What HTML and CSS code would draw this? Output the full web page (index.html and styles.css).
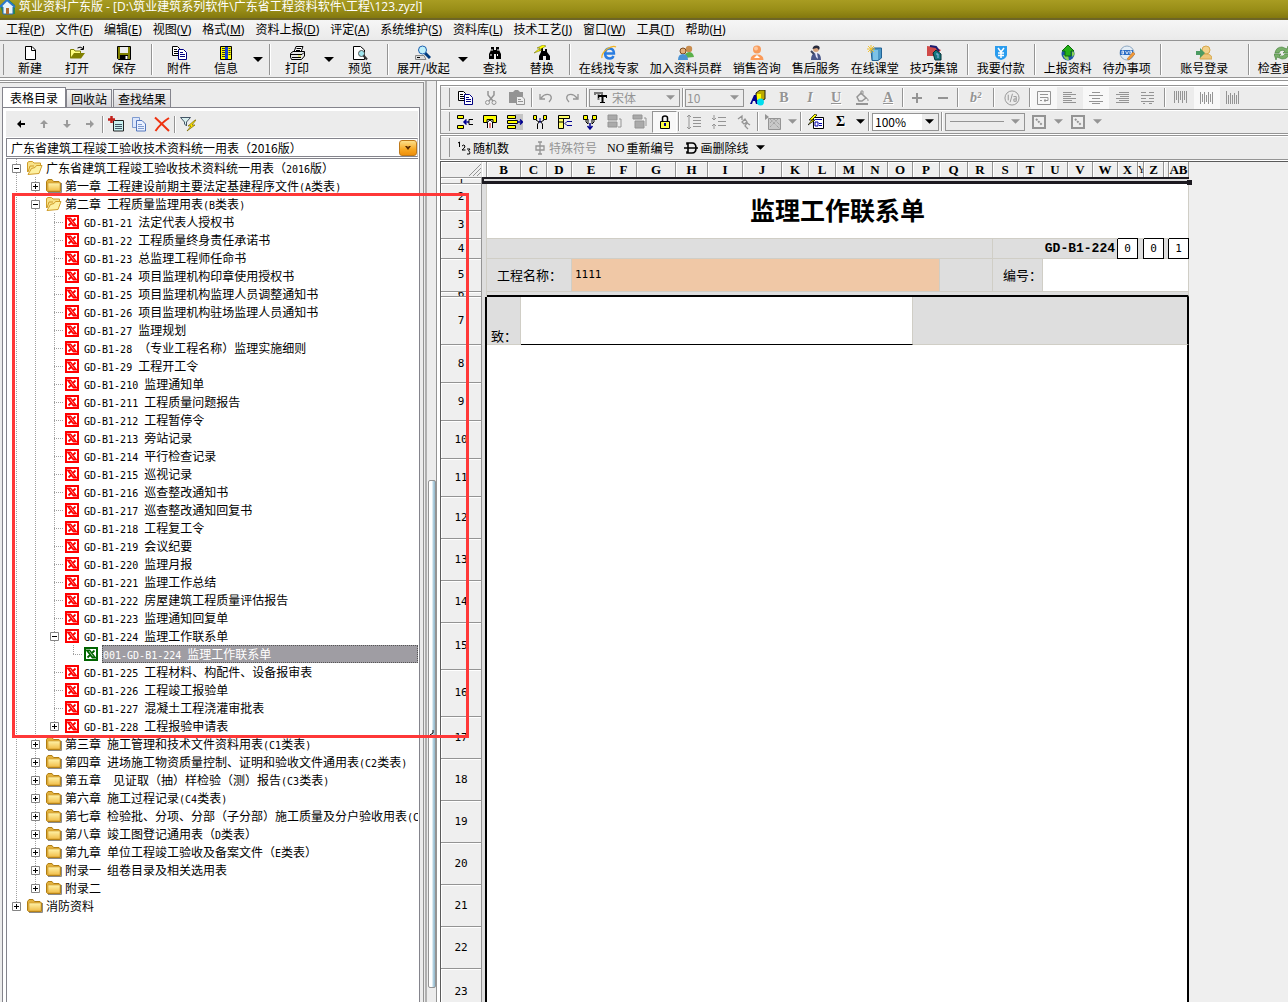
FILE: index.html
```html
<!DOCTYPE html>
<html lang="zh-CN">
<head>
<meta charset="utf-8">
<title>筑业资料广东版</title>
<link rel="stylesheet" href="styles.css">
</head>
<body>
<svg class="defs" width="0" height="0" aria-hidden="true">
  <defs>
    <linearGradient id="gold" x1="0" y1="0" x2="0" y2="1"><stop offset="0" stop-color="#fff3a8"/><stop offset="1" stop-color="#f0bd48"/></linearGradient>
  </defs>
  <symbol id="closed" viewBox="0 0 17 16"><path d="M3 14.500H16.500V5" fill="none" stroke="#8a8a8a"/><path d="M1.500 12.500V3.500L3 1.500H7L8.500 3.500H14L15.500 5V13.500H2.500Z" fill="#e2b13c" stroke="#b07d12"/><path d="M3 5H15V13H3Z" fill="url(#gold)" stroke="#c9962a" stroke-width=".6"/></symbol>
  <symbol id="open" viewBox="0 0 17 16"><path d="M1.500 12V2.500L3 1.500H6.500L8 3H14.500V7" fill="#f8e287" stroke="#cf9d2a"/><path d="M2 14.500L5.500 8.500L9 7.500L10.500 5.500H16L13 13.500Z" fill="#fdf0a0" stroke="#cf9d2a"/><path d="M2 12L4 6H8" fill="none" stroke="#cf9d2a"/></symbol>
  <symbol id="sheet" viewBox="0 0 14 14"><path d="M0 0H14V14H0Z" fill="currentColor"/><path d="M2 2H12V12H2Z" fill="#fff"/><path d="M3 3.500H5.500L11 10.500H8.500ZM10.500 3.500L3.500 10.500" fill="currentColor" stroke="currentColor" stroke-width="1.800"/><path d="M5 4L9 9.500" stroke="#fff" stroke-width=".6"/></symbol>
  <symbol id="plus" viewBox="0 0 9 9"><path d="M.5.5H8.500V8.500H.5Z" fill="#fff" stroke="#848484"/><path d="M2 4.500H7M4.500 2V7" stroke="#000"/></symbol>
  <symbol id="minus" viewBox="0 0 9 9"><path d="M.5.5H8.500V8.500H.5Z" fill="#fff" stroke="#848484"/><path d="M2 4.500H7" stroke="#000"/></symbol>
  <symbol id="down" viewBox="0 0 10 5"><path d="M0 0H10L5 5Z" fill="currentColor"/></symbol>
  <symbol id="copy" viewBox="0 0 16 16"><path d="M1.500 1.500H6.500L8.500 3.500V10.500H1.500Z" fill="#fff" stroke="#000"/><path d="M3 4.500H6M3 6.500H7M3 8.500H7" stroke="#000"/><path d="M7.500 4.500H12.500L15.500 7.500V14.500H7.500Z" fill="#fff" stroke="#000080"/><path d="M9 7.500H12M9 9.500H14M9 11.500H14" stroke="#000080"/></symbol>
  <symbol id="binoc" viewBox="0 0 16 16"><path d="M4 2H7V5H9V2H12V5L14 9V14H9V9H7V14H2V9L4 5Z" fill="#000"/><path d="M5 4V6M11 4V6M4 9V11M10.500 9V11" stroke="#fff"/></symbol>
  <symbol id="box" viewBox="0 0 14 14"><path d="M1 1H13V13H1Z" fill="#eee" stroke="#949494" stroke-width="2"/><path d="M4 4L10 10" stroke="#949494" stroke-width="2" stroke-dasharray="2 1"/></symbol>
</svg>

<header class="titlebar">
  <svg width="16" height="16" viewBox="0 0 16 16"><path d="M0 7L8 0L15 6V15H3Z" fill="#2d8a3d"/><path d="M0 7L7 1L15 8H13V15H3V8Z" fill="#e8f3fa" stroke="#286cb8"/><path d="M0 8L7 1L15 8" fill="none" stroke="#2d79c9" stroke-width="2"/><path d="M6 9H9V15H6Z" fill="#b06a30"/></svg>
  <h1>筑业资料广东版 - [D:\筑业建筑系列软件\广东省工程资料软件\工程\123.zyzl]</h1>
</header>

<nav class="menubar">
  <a href="#">工程(<u>P</u>)</a><a href="#">文件(<u>F</u>)</a><a href="#">编辑(<u>E</u>)</a><a href="#">视图(<u>V</u>)</a><a href="#">格式(<u>M</u>)</a><a href="#">资料上报(<u>D</u>)</a><a href="#">评定(<u>A</u>)</a><a href="#">系统维护(<u>S</u>)</a><a href="#">资料库(<u>L</u>)</a><a href="#">技术工艺(<u>J</u>)</a><a href="#">窗口(<u>W</u>)</a><a href="#">工具(<u>T</u>)</a><a href="#">帮助(<u>H</u>)</a>
</nav>

<div class="toolbar" role="toolbar" aria-label="常用">
  <button><svg class="ic" viewBox="0 0 16 16"><path d="M3.500 1.500H10L13.500 5V14.500H3.500Z" fill="#fff" stroke="#000"/><path d="M9.500 1.500V5.500H13.500" fill="none" stroke="#000"/></svg>新建</button>
  <button><svg class="ic" viewBox="0 0 16 16"><path d="M1.500 13V4.500H5L6 6H11.500V8" fill="#ffff80" stroke="#808000"/><path d="M1 13.500L5 8H16L12 13.500Z" fill="#808000"/><path d="M8.500 3Q11 1 14 3.500M14.500 1V4.500H11.500" fill="none" stroke="#000"/></svg>打开</button>
  <button><svg class="ic" viewBox="0 0 16 16"><path d="M1.500 1.500H14.500V14.500H2.500L1.500 13.500Z" fill="#808000" stroke="#000"/><path d="M4 2H12V8H4Z" fill="#ececec"/><path d="M4 10H12V14H4Z" fill="#000"/><path d="M9.500 11H11.500V14H9.500Z" fill="#fff"/></svg>保存</button>
  <span class="sep"></span>
  <button><svg class="ic"><use href="#copy"/></svg>附件</button>
  <button><svg class="ic" viewBox="0 0 16 16"><path d="M2.500 1.500H13.500V14.500H2.500Z" fill="#ff0" stroke="#000"/><path d="M7 2H10V14H7Z" fill="#1540d8"/><path d="M4 3.500H7M4 5.500H7M4 7.500H7M4 9.500H7M4 11.500H7M10.500 3.500H12.500M10.500 5.500H12.500M10.500 7.500H12.500M10.500 9.500H12.500" stroke="#333"/></svg>信息</button>
  <button class="drop" aria-label="信息选项"><svg><use href="#down"/></svg></button>
  <span class="sep"></span>
  <button><svg class="ic" viewBox="0 0 16 16"><path d="M5 7L7 1.500H14L12 7" fill="#fff" stroke="#000"/><path d="M7.500 3.500H12M7 5.500H11" stroke="#000"/><path d="M1.500 8.500L4 6.500H15.500V11L12.500 14.500H2.500L1.500 12Z" fill="#e8e8e8" stroke="#000"/><path d="M2 9.500H13L15 7.500M3 12.500H12" fill="none" stroke="#000"/><path d="M9 11H12" stroke="#dd0"/></svg>打印</button>
  <button class="drop" aria-label="打印选项"><svg><use href="#down"/></svg></button>
  <button><svg class="ic" viewBox="0 0 16 16"><path d="M1.500 1.500H8.500L12.500 5V14.500H1.500Z" fill="#fff" stroke="#000"/><circle cx="9.500" cy="8.500" r="3" fill="#9fe6ee" stroke="#555"/><path d="M11.500 10.500L15 14.500" stroke="#333" stroke-width="2"/></svg>预览</button>
  <span class="sep"></span>
  <button><svg class="ic" viewBox="0 0 16 16"><path d="M.5 10.500H9L11 14.500H.5Z" fill="#ddd" stroke="#888"/><path d="M2 12.500H5" stroke="#000"/><path d="M10 8L15 13" stroke="#003a7c" stroke-width="3"/><circle cx="7.500" cy="5" r="4" fill="#bff0fb" stroke="#1e60b0"/></svg>展开/收起</button>
  <button class="drop" aria-label="展开选项"><svg><use href="#down"/></svg></button>
  <button><svg class="ic"><use href="#binoc"/></svg>查找</button>
  <button><svg class="ic" viewBox="0 0 16 16"><path d="M7 3H9V6H11V4H13V7L16 11V15H12V11H9V15H5V11L7 7Z" fill="#000"/><path d="M9 0L3 3H6L0 8L8 5H5L12 1Z" fill="#ff0" stroke="#660" stroke-width=".5"/></svg>替换</button>
  <span class="sep"></span>
  <button><svg class="ic" viewBox="0 0 16 16"><path d="M3.500 8.500H13Q13 3.500 8.500 3.500T4 9Q4.500 13.500 9 13.500Q11.500 13.500 12.500 11" fill="none" stroke="#2a7de1" stroke-width="2.400"/><path d="M1 13Q0 9 6 4Q12 0 15 2" fill="none" stroke="#f0b323" stroke-width="1.200"/></svg>在线找专家</button>
  <button><svg class="ic" viewBox="0 0 16 16"><circle cx="11" cy="4" r="3.200" fill="#c98d4e"/><path d="M6 13Q7 7 11 7T16 12Z" fill="#5bb04a"/><circle cx="5" cy="6" r="3" fill="#e3b07c" stroke="#7a4b20"/><path d="M0 15Q0 9 5 9T10 15Z" fill="#4a93d4"/></svg>加入资料员群</button>
  <button><svg class="ic" viewBox="0 0 16 16"><circle cx="8" cy="4.500" r="4" fill="#f79a5a"/><circle cx="7" cy="3.500" r="2" fill="#fdc79e"/><path d="M1.500 15Q1.500 9.500 8 9.500T14.500 15Z" fill="#fb9a58"/><path d="M5 13L8 10L11 13Z" fill="#fff"/></svg>销售咨询</button>
  <button><svg class="ic" viewBox="0 0 16 16"><circle cx="8" cy="4" r="3" fill="#d6a27c"/><path d="M4.500 4Q5 0 9 .5T11 5L9 3Z" fill="#272a3c"/><path d="M3 15Q3 8 8 8T13 15Z" fill="#48568a"/><path d="M7 8L9 8L10 14L8 12Z" fill="#e8e8ff"/><path d="M3 6L6 9" stroke="#39435f" stroke-width="2"/></svg>售后服务</button>
  <button><svg class="ic" viewBox="0 0 16 16"><path d="M4 5L7 3H14.500V13L11 15.500H5Z" fill="#4a98c8" stroke="#236394"/><path d="M6 5H11V15H6Z" fill="#7cc2e6"/><path d="M4 0V8M0 4H8M1 1L7 7M7 1L1 7" stroke="#f2c230"/></svg>在线课堂</button>
  <button><svg class="ic" viewBox="0 0 16 16"><path d="M1 1L9 2L15 5L10 11H1Z" fill="#d04a48"/><path d="M4 1L10 2L13 6" fill="none" stroke="#1b1c70" stroke-width="2"/><path d="M7 8L10 5L15 9V15H9Z" fill="#157a80" stroke="#052e35"/><path d="M10 9H12V13" stroke="#9be" fill="none"/></svg>技巧集锦</button>
  <span class="sep"></span>
  <button><svg class="ic" viewBox="0 0 16 16"><path d="M2 1H14V10Q13 14 8 15Q3 14 2 10Z" fill="#2a9cee"/><path d="M5 3L8 7L11 3M8 7V13M5 8H11M5 10.500H11" fill="none" stroke="#fff" stroke-width="1.500"/></svg>我要付款</button>
  <span class="sep"></span>
  <button><svg class="ic" viewBox="0 0 16 16"><circle cx="8" cy="9" r="6.500" fill="#1d55a8"/><path d="M3 10Q5 16 9 15L8 10ZM12 5L15 9L12 12Z" fill="#8ad05a"/><path d="M8 0L14 6H11V11H5V6H2Z" fill="#24b018" stroke="#0a6b0a"/></svg>上报资料</button>
  <button><svg class="ic" viewBox="0 0 16 16"><circle cx="8" cy="8" r="7" fill="#e3edf6" stroke="#8fa9c2"/><path d="M1 5H14V10H1Z" fill="#2b6cc4"/><path d="M3 6V9H4.500V6ZM6.500 6L8 9L9.500 6M11 6V9H12.500V6Z" fill="none" stroke="#fff" stroke-width=".8"/><path d="M8 14L14 7L16 9L10 15Z" fill="#f29a38" stroke="#b5651a" stroke-width=".5"/></svg>待办事项</button>
  <span class="sep"></span>
  <button class="roomy"><svg class="ic" viewBox="0 0 16 16"><circle cx="10" cy="5" r="4" fill="#f3d18a" stroke="#d6a84e"/><path d="M4 14Q4 9 10 9T16 14Z" fill="#edc679" stroke="#d6a84e"/><path d="M0 6H4V3L9 8L4 13V10H0Z" fill="#4c9b62"/></svg>账号登录</button>
  <span class="sep"></span>
  <button><svg class="ic" viewBox="0 0 16 16"><path d="M1 8Q2 2 8 2L13 4L14 1L16 8H9L11 6Q6 4 5 8ZM15 9Q14 14 8 14L3 12L2 15L0 9H7L5 11Q10 12 11 9Z" fill="#79b06a" stroke="#3f7a36" stroke-width=".6"/></svg>检查更新</button>
</div>

<main class="workspace">
  <aside class="sidebar">
    <div class="tabs" role="tablist">
      <button role="tab" aria-selected="true" class="tab active">表格目录</button><button role="tab" class="tab">回收站</button><button role="tab" class="tab">查找结果</button>
    </div>
    <div class="tabpanel">
      <div class="treetools">
        <button aria-label="后退"><svg viewBox="0 0 16 16"><path d="M4 8L8 4V7H12V9H8V12Z" fill="#000"/></svg></button>
        <button aria-label="上移"><svg viewBox="0 0 16 16"><path d="M8 4L12 8H9V12H7V8H4Z" fill="#9a9a9a"/></svg></button>
        <button aria-label="下移"><svg viewBox="0 0 16 16"><path d="M8 12L4 8H7V4H9V8H12Z" fill="#9a9a9a"/></svg></button>
        <button aria-label="前进"><svg viewBox="0 0 16 16"><path d="M12 8L8 4V7H4V9H8V12Z" fill="#9a9a9a"/></svg></button>
        <span class="sep"></span>
        <button aria-label="新增表格"><svg viewBox="0 0 16 16"><path d="M5.500 4.500H15.500V15H5.500Z" fill="#c9f0ef" stroke="#222"/><path d="M7 8.500H14M7 10.500H14M7 12.500H14" stroke="#456"/><path d="M3.500 0V7M0 3.500H7" stroke="#c3211b" stroke-width="2.500"/></svg></button>
        <button aria-label="复制表格"><svg viewBox="0 0 16 16"><path d="M1.500 1.500H8.500V11.500H1.500Z" fill="#dce6fa" stroke="#7f9bd0"/><path d="M5.500 4.500H11L14.500 8V15H5.500Z" fill="#eaf1ff" stroke="#5477bd"/><path d="M7 8.500H11M7 10.500H13M7 12.500H13" stroke="#7f9bd0"/></svg></button>
        <button aria-label="删除"><svg viewBox="0 0 16 16"><path d="M1 1.500Q7 7 15 15M15 2Q7 7 1.500 15" fill="none" stroke="#ee3311" stroke-width="2"/></svg></button>
        <span class="sep"></span>
        <button aria-label="筛选"><svg viewBox="0 0 16 16"><path d="M.5 1.500H10.500L6.500 6V10L4.500 8V6Z" fill="#d8efef" stroke="#456"/><path d="M15 4L8 10H11L7 15L15 9H12L16 4Z" fill="#ffe600" stroke="#776500" stroke-width=".7"/></svg></button>
      </div>
      <div class="library">
        <select aria-label="资料库"><option>广东省建筑工程竣工验收技术资料统一用表（2016版）</option></select>
        <span class="knob"><svg width="6" height="4" viewBox="0 0 6 4"><path d="M0 0H2L3 1L4 0H6L3 4Z" fill="#5a2a00"/></svg></span>
      </div>
      <div class="tree">
        <ul>
          <li><div class="row"><button class="tg" aria-label="折叠"><svg><use href="#minus"/></svg></button><svg class="fo"><use href="#open"/></svg><a href="#">广东省建筑工程竣工验收技术资料统一用表（<code>2016</code>版）</a></div>
            <ul>
              <li><div class="row"><button class="tg" aria-label="展开"><svg><use href="#plus"/></svg></button><svg class="fo"><use href="#closed"/></svg><a href="#">第一章<code> </code>工程建设前期主要法定基建程序文件<code>(A</code>类表<code>)</code></a></div></li>
              <li><div class="row"><button class="tg" aria-label="折叠"><svg><use href="#minus"/></svg></button><svg class="fo"><use href="#open"/></svg><a href="#">第二章<code> </code>工程质量监理用表<code>(B</code>类表<code>)</code></a></div>
                <ul>
                  <li class="row leaf"><svg class="sh"><use href="#sheet"/></svg><a href="#"><code>GD-B1-21 </code>法定代表人授权书</a></li>
                  <li class="row leaf"><svg class="sh"><use href="#sheet"/></svg><a href="#"><code>GD-B1-22 </code>工程质量终身责任承诺书</a></li>
                  <li class="row leaf"><svg class="sh"><use href="#sheet"/></svg><a href="#"><code>GD-B1-23 </code>总监理工程师任命书</a></li>
                  <li class="row leaf"><svg class="sh"><use href="#sheet"/></svg><a href="#"><code>GD-B1-24 </code>项目监理机构印章使用授权书</a></li>
                  <li class="row leaf"><svg class="sh"><use href="#sheet"/></svg><a href="#"><code>GD-B1-25 </code>项目监理机构监理人员调整通知书</a></li>
                  <li class="row leaf"><svg class="sh"><use href="#sheet"/></svg><a href="#"><code>GD-B1-26 </code>项目监理机构驻场监理人员通知书</a></li>
                  <li class="row leaf"><svg class="sh"><use href="#sheet"/></svg><a href="#"><code>GD-B1-27 </code>监理规划</a></li>
                  <li class="row leaf"><svg class="sh"><use href="#sheet"/></svg><a href="#"><code>GD-B1-28 </code>（专业工程名称）监理实施细则</a></li>
                  <li class="row leaf"><svg class="sh"><use href="#sheet"/></svg><a href="#"><code>GD-B1-29 </code>工程开工令</a></li>
                  <li class="row leaf"><svg class="sh"><use href="#sheet"/></svg><a href="#"><code>GD-B1-210 </code>监理通知单</a></li>
                  <li class="row leaf"><svg class="sh"><use href="#sheet"/></svg><a href="#"><code>GD-B1-211 </code>工程质量问题报告</a></li>
                  <li class="row leaf"><svg class="sh"><use href="#sheet"/></svg><a href="#"><code>GD-B1-212 </code>工程暂停令</a></li>
                  <li class="row leaf"><svg class="sh"><use href="#sheet"/></svg><a href="#"><code>GD-B1-213 </code>旁站记录</a></li>
                  <li class="row leaf"><svg class="sh"><use href="#sheet"/></svg><a href="#"><code>GD-B1-214 </code>平行检查记录</a></li>
                  <li class="row leaf"><svg class="sh"><use href="#sheet"/></svg><a href="#"><code>GD-B1-215 </code>巡视记录</a></li>
                  <li class="row leaf"><svg class="sh"><use href="#sheet"/></svg><a href="#"><code>GD-B1-216 </code>巡查整改通知书</a></li>
                  <li class="row leaf"><svg class="sh"><use href="#sheet"/></svg><a href="#"><code>GD-B1-217 </code>巡查整改通知回复书</a></li>
                  <li class="row leaf"><svg class="sh"><use href="#sheet"/></svg><a href="#"><code>GD-B1-218 </code>工程复工令</a></li>
                  <li class="row leaf"><svg class="sh"><use href="#sheet"/></svg><a href="#"><code>GD-B1-219 </code>会议纪要</a></li>
                  <li class="row leaf"><svg class="sh"><use href="#sheet"/></svg><a href="#"><code>GD-B1-220 </code>监理月报</a></li>
                  <li class="row leaf"><svg class="sh"><use href="#sheet"/></svg><a href="#"><code>GD-B1-221 </code>监理工作总结</a></li>
                  <li class="row leaf"><svg class="sh"><use href="#sheet"/></svg><a href="#"><code>GD-B1-222 </code>房屋建筑工程质量评估报告</a></li>
                  <li class="row leaf"><svg class="sh"><use href="#sheet"/></svg><a href="#"><code>GD-B1-223 </code>监理通知回复单</a></li>
                  <li><div class="row"><button class="tg" aria-label="折叠"><svg><use href="#minus"/></svg></button><svg class="sh"><use href="#sheet"/></svg><a href="#"><code>GD-B1-224 </code>监理工作联系单</a></div>
                    <ul>
                      <li class="row leaf"><svg class="sh done"><use href="#sheet"/></svg><a href="#" class="selected"><code>001-GD-B1-224 </code>监理工作联系单</a></li>
                    </ul>
                  </li>
                  <li class="row leaf"><svg class="sh"><use href="#sheet"/></svg><a href="#"><code>GD-B1-225 </code>工程材料、构配件、设备报审表</a></li>
                  <li class="row leaf"><svg class="sh"><use href="#sheet"/></svg><a href="#"><code>GD-B1-226 </code>工程竣工报验单</a></li>
                  <li class="row leaf"><svg class="sh"><use href="#sheet"/></svg><a href="#"><code>GD-B1-227 </code>混凝土工程浇灌审批表</a></li>
                  <li><div class="row"><button class="tg" aria-label="展开"><svg><use href="#plus"/></svg></button><svg class="sh"><use href="#sheet"/></svg><a href="#"><code>GD-B1-228 </code>工程报验申请表</a></div></li>
                </ul>
              </li>
              <li><div class="row"><button class="tg" aria-label="展开"><svg><use href="#plus"/></svg></button><svg class="fo"><use href="#closed"/></svg><a href="#">第三章<code> </code>施工管理和技术文件资料用表<code>(C1</code>类表<code>)</code></a></div></li>
              <li><div class="row"><button class="tg" aria-label="展开"><svg><use href="#plus"/></svg></button><svg class="fo"><use href="#closed"/></svg><a href="#">第四章<code> </code>进场施工物资质量控制、证明和验收文件通用表<code>(C2</code>类表<code>)</code></a></div></li>
              <li><div class="row"><button class="tg" aria-label="展开"><svg><use href="#plus"/></svg></button><svg class="fo"><use href="#closed"/></svg><a href="#">第五章<code>  </code>见证取（抽）样检验（测）报告<code>(C3</code>类表<code>)</code></a></div></li>
              <li><div class="row"><button class="tg" aria-label="展开"><svg><use href="#plus"/></svg></button><svg class="fo"><use href="#closed"/></svg><a href="#">第六章<code> </code>施工过程记录<code>(C4</code>类表<code>)</code></a></div></li>
              <li><div class="row"><button class="tg" aria-label="展开"><svg><use href="#plus"/></svg></button><svg class="fo"><use href="#closed"/></svg><a href="#">第七章<code> </code>检验批、分项、分部（子分部）施工质量及分户验收用表<code>(C5</code>类表<code>)</code></a></div></li>
              <li><div class="row"><button class="tg" aria-label="展开"><svg><use href="#plus"/></svg></button><svg class="fo"><use href="#closed"/></svg><a href="#">第八章<code> </code>竣工图登记通用表（<code>D</code>类表）</a></div></li>
              <li><div class="row"><button class="tg" aria-label="展开"><svg><use href="#plus"/></svg></button><svg class="fo"><use href="#closed"/></svg><a href="#">第九章<code> </code>单位工程竣工验收及备案文件（<code>E</code>类表）</a></div></li>
              <li><div class="row"><button class="tg" aria-label="展开"><svg><use href="#plus"/></svg></button><svg class="fo"><use href="#closed"/></svg><a href="#">附录一<code> </code>组卷目录及相关选用表</a></div></li>
              <li><div class="row"><button class="tg" aria-label="展开"><svg><use href="#plus"/></svg></button><svg class="fo"><use href="#closed"/></svg><a href="#">附录二</a></div></li>
            </ul>
          </li>
          <li><div class="row"><button class="tg" aria-label="展开"><svg><use href="#plus"/></svg></button><svg class="fo"><use href="#closed"/></svg><a href="#">消防资料</a></div></li>
        </ul>
      </div>
    </div>
  </aside>

  <div class="splitter"><span class="grip"><svg width="5" height="8" viewBox="0 0 5 8"><path d="M4 0V3L1 5L4 7" fill="none" stroke="#000"/></svg></span></div>

  <section class="editor">
    <div class="bar first" role="toolbar" aria-label="格式">
      <button aria-label="复制"><svg><use href="#copy"/></svg></button>
      <button aria-label="剪切" disabled><svg viewBox="0 0 16 16"><path d="M5 1V5L10 11M11 1V5L6 11" fill="none" stroke="#949494" stroke-width="1.500"/><circle cx="4.500" cy="12.500" r="2" fill="none" stroke="#949494"/><circle cx="11" cy="12.500" r="2" fill="none" stroke="#949494"/></svg></button>
      <button aria-label="粘贴" disabled><svg viewBox="0 0 16 16"><path d="M0 2H4L6 0H9L11 2H14V13H0Z" fill="#949494"/><path d="M7.500 6.500H13L15.500 9V14.500H7.500Z" fill="#eee" stroke="#949494"/><path d="M9 9.500H12M9 11.500H14" stroke="#949494"/></svg></button>
      <span class="sep"></span>
      <button aria-label="撤销" disabled><svg viewBox="0 0 16 16"><path d="M2 4V9H7M3 8Q7 3 12 5Q15 8 11 12" fill="none" stroke="#949494" stroke-width="1.300"/></svg></button>
      <button aria-label="重做" disabled><svg viewBox="0 0 16 16"><path d="M14 4V9H9M13 8Q9 3 4 5Q1 8 5 12" fill="none" stroke="#949494" stroke-width="1.300"/></svg></button>
      <span class="sep"></span>
      <div class="combo font"><svg class="tt" viewBox="0 0 14 14"><path d="M0 1H9V4H7V3H5.500V9H3.500V3H2V4H0Z" fill="#777"/><path d="M4 4H13V7H12V6H9.500V11H11V12H6V11H7.500V6H5V7H4Z" fill="#000"/></svg><select aria-label="字体" disabled><option>宋体</option></select><svg class="ar"><use href="#down"/></svg></div>
      <span class="sep"></span>
      <div class="combo size"><select aria-label="字号" disabled><option>10</option></select><svg class="ar"><use href="#down"/></svg></div>
      <button aria-label="颜色"><svg viewBox="0 0 16 16"><path d="M6 3L10 0H15V9L11 11H6Z" fill="#ba0" stroke="#221"/><path d="M7 4H11V10H7Z" fill="#ff0"/><path d="M0 14L4 5H6L8 14H6L5 11H3L2 14Z" fill="#000090"/><circle cx="10.500" cy="12" r="3.500" fill="#0de"/></svg></button>
      <button class="ch" disabled>B</button>
      <button class="ch italic" disabled>I</button>
      <button class="ch under" disabled>U</button>
      <button aria-label="填充" disabled><svg viewBox="0 0 16 16"><path d="M3 7L7 3L12 8L8 11H5Z" fill="none" stroke="#949494" stroke-width="1.500"/><path d="M7 5V1H9V4M12 8Q15 9 14 11" fill="none" stroke="#949494"/><path d="M2 13H14V15H2Z" fill="#949494"/></svg></button>
      <button class="ch under" disabled>A</button>
      <span class="sep"></span>
      <button aria-label="增大" disabled><svg viewBox="0 0 16 16"><path d="M3 8H13M8 3V13" stroke="#949494" stroke-width="2"/></svg></button>
      <button aria-label="减小" disabled><svg viewBox="0 0 16 16"><path d="M3 8H13" stroke="#949494" stroke-width="2"/></svg></button>
      <span class="sep"></span>
      <button class="ch italic wide" disabled>b²</button>
      <span class="sep"></span>
      <button class="wide" aria-label="分数" disabled><svg viewBox="0 0 17 17"><circle cx="8.500" cy="8.500" r="7.500" fill="none" stroke="#949494"/><path d="M4.500 5V11M9 4L6.500 13M10 7H13V12H10.500V9.500H13" fill="none" stroke="#949494"/></svg></button>
      <span class="sep"></span>
      <button class="on" aria-label="自动换行" disabled><svg viewBox="0 0 16 16"><path d="M1.500 1.500H14.500V14.500H1.500Z" fill="none" stroke="#949494"/><path d="M4 4.500H12M4 7.500H12V10.500H8M4 10.500H6M9 9V12" fill="none" stroke="#949494"/></svg></button>
      <button aria-label="左对齐" disabled><svg viewBox="0 0 16 16"><path d="M1 2.500H10M1 4.500H14M1 6.500H9M1 8.500H14M1 10.500H10M1 12.500H14" stroke="#949494"/></svg></button>
      <button class="on" aria-label="居中" disabled><svg viewBox="0 0 16 16"><path d="M4 2.500H12M1 5.500H15M4 8.500H12M1 11.500H15M4 13.500H12" stroke="#949494"/></svg></button>
      <button aria-label="右对齐" disabled><svg viewBox="0 0 16 16"><path d="M5 2.500H15M2 4.500H15M6 6.500H15M2 8.500H15M5 10.500H15M2 12.500H15" stroke="#949494"/></svg></button>
      <button aria-label="两端对齐" disabled><svg viewBox="0 0 16 16"><path d="M1 2.500H6M9 2.500H14M1 5.500H14M1 8.500H6M9 8.500H14M1 11.500H14M3 13.500H5M9 13.500H12" stroke="#949494"/></svg></button>
      <span class="sep far"></span>
      <button aria-label="顶端对齐" disabled><svg viewBox="0 0 16 16"><path d="M1.500 1V13M3.500 1V10M5.500 1V13M7.500 1V10M9.500 1V13M11.500 1V10M13.500 1V13" stroke="#949494"/></svg></button>
      <button class="on" aria-label="垂直居中" disabled><svg viewBox="0 0 16 16"><path d="M1.500 2V14M3.500 4V12M5.500 2V14M7.500 5V12M9.500 2V14M11.500 4V12M13.500 2V14" stroke="#949494"/></svg></button>
      <button aria-label="底端对齐" disabled><svg viewBox="0 0 16 16"><path d="M1.500 1V14M3.500 5V14M5.500 3V14M7.500 5V14M9.500 3V14M11.500 5V14M13.500 1V14" stroke="#949494"/></svg></button>
    </div>

    <div class="bar cells" role="toolbar" aria-label="单元格">
      <button aria-label="插入行"><svg viewBox="0 0 16 16"><path d="M.5 1.500H6.500V4.500H.5ZM.5 11.500H6.500V14.500H.5Z" fill="#ff0" stroke="#000"/><path d="M7 8H12M9.500 5.500L7 8L9.500 10.500" fill="none" stroke="#000090" stroke-width="1.500"/><path d="M16 5.500H12V10.500H16" fill="none" stroke="#000"/></svg></button>
      <button aria-label="插入列"><svg viewBox="0 0 16 16"><path d="M1.500 1.500H14.500V8.500H11V5.500H5V8.500H1.500Z" fill="#ff0" stroke="#000"/><path d="M5.500 14V8L8 6L10.500 8V14" fill="#fff" stroke="#000"/><path d="M8 9V14" stroke="#c00"/></svg></button>
      <button aria-label="追加行"><svg viewBox="0 0 16 16"><path d="M8 0H16V16H8Z" fill="#c4c4c4"/><path d="M.5 1.500H8.500V4.500H.5ZM.5 6.500H10.500V9.500H.5ZM.5 11.500H8.500V14.500H.5Z" fill="#ff0" stroke="#000"/><path d="M10 8H15M13 5.500L15.500 8L13 10.500" fill="none" stroke="#000090" stroke-width="1.500"/></svg></button>
      <button aria-label="拆分单元格"><svg viewBox="0 0 16 16"><path d="M1.500 1.500H4.500V5.500H1.500ZM11.500 1.500H14.500V5.500H11.500Z" fill="#ff0" stroke="#000"/><path d="M5.500 15V10L8 7L10.500 10V15M4 6L7 8M12 6L9 8" fill="none" stroke="#000"/><path d="M8 4V9" stroke="#000090"/></svg></button>
      <button aria-label="删除列"><svg viewBox="0 0 16 16"><path d="M1.500 1.500H12.500V4.500H1.500ZM1.500 4.500H6.500V14.500H1.500ZM1.500 8H6.500" fill="#ff6" stroke="#000"/><path d="M8 9.500L10 7.500H15M10 11.500H15M8 9.500L10 11.500" fill="none" stroke="#000090"/></svg></button>
      <button aria-label="合并单元格"><svg viewBox="0 0 16 16"><path d="M1.500 1.500H5.500V5.500H1.500ZM10.500 1.500H14.500V5.500H10.500Z" fill="#ff0" stroke="#000"/><path d="M4 6V8L6 10V5M12 6V8L10 10V5" fill="none" stroke="#000"/><path d="M8 9V14M5.500 12L8 15L10.500 12" fill="none" stroke="#000090" stroke-width="1.500"/></svg></button>
      <button aria-label="行高" disabled><svg viewBox="0 0 16 16"><path d="M1 1H10V6H1ZM1 8H10V13H1Z" fill="#aaa" stroke="#949494"/><path d="M12 5H14V13H11" fill="none" stroke="#949494"/></svg></button>
      <button aria-label="列宽" disabled><svg viewBox="0 0 16 16"><path d="M1 1H10V5H1ZM3 7H12V14H3Z" fill="#aaa" stroke="#949494"/><path d="M12 4H14V12" fill="none" stroke="#949494"/></svg></button>
      <button class="on pressed" aria-label="锁定"><svg viewBox="0 0 16 16"><path d="M5.500 7V4Q5.500 2 8 2T10.500 4V7" fill="none" stroke="#000" stroke-width="1.500"/><path d="M3.500 7.500H12.500V14.500H3.500Z" fill="#ff4" stroke="#000"/><path d="M8 9V12" stroke="#000090" stroke-width="2"/></svg></button>
      <span class="sep"></span>
      <button aria-label="增大行距" disabled><svg viewBox="0 0 16 16"><path d="M3 1V15M1 3L3 1L5 3M1 13L3 15L5 13M7 3.500H15M7 6.500H15M7 9.500H15M7 12.500H15" fill="none" stroke="#949494"/></svg></button>
      <button aria-label="减小行距" disabled><svg viewBox="0 0 16 16"><path d="M3 1V6M3 15V10M1 4L3 6L5 4M1 12L3 10L5 12M7 3.500H15M7 7.500H15M7 11.500H15" fill="none" stroke="#949494"/></svg></button>
      <button aria-label="文字方向" disabled><svg viewBox="0 0 16 16"><path d="M2 5L6 2V6M6 8L9 5L11 8L8 10ZM14 11L11 9L9 12L12 15" fill="none" stroke="#949494" stroke-width="1.300"/></svg></button>
      <span class="sep"></span>
      <button aria-label="图案" disabled><svg viewBox="0 0 16 16"><path d="M0 0L4 3L0 6Z" fill="#949494"/><path d="M3.500 4.500H15.500V15.500H3.500Z" fill="#c8c8c8" stroke="#949494"/><path d="M5 5L15 15M9 5L15 11M13 5L5 13M5 9L9 5" stroke="#949494" stroke-dasharray="1 1"/></svg></button>
      <button class="drop" aria-label="图案选项" disabled><svg class="ar"><use href="#down"/></svg></button>
      <span class="sep"></span>
      <button aria-label="自动填表"><svg viewBox="0 0 16 16"><path d="M5.500 3.500H15.500V14.500H5.500Z" fill="#fff" stroke="#000"/><path d="M7 5.500H14M7 8H10V12H7ZM11 9.500H14M11 11.500H14" fill="none" stroke="#00a"/><path d="M7 0L1 6H4L0 11L7 6H4L9 1Z" fill="#ff0" stroke="#000" stroke-width=".7"/></svg></button>
      <button class="ch">Σ</button>
      <button class="drop" aria-label="求和选项"><svg class="ar"><use href="#down"/></svg></button>
      <span class="sep"></span>
      <div class="combo scale"><select aria-label="显示比例"><option>100%</option></select><svg class="ar"><use href="#down"/></svg></div>
      <span class="sep"></span>
      <div class="combo line"><hr><svg class="ar"><use href="#down"/></svg></div>
      <button aria-label="边框" disabled><svg class="bx"><use href="#box"/></svg></button>
      <button class="drop" aria-label="边框选项" disabled><svg class="ar"><use href="#down"/></svg></button>
      <button aria-label="斜线" disabled><svg class="bx"><use href="#box"/></svg></button>
      <button class="drop" aria-label="斜线选项" disabled><svg class="ar"><use href="#down"/></svg></button>
    </div>

    <div class="bar last" role="toolbar" aria-label="编号">
      <button class="txt"><svg viewBox="0 0 14 14"><path d="M1 2L2.500 1V6M5 5Q7 3 8 5Q8 7 5 9H8.500M10 8H13L11.500 10Q14 11 12.500 13H10" fill="none" stroke="#000"/></svg>随机数</button>
      <button class="txt apart" disabled><svg viewBox="0 0 14 14"><path d="M7 1V13M5 1H9M5 13H9M3 5H11V9H3Z" fill="none" stroke="#949494" stroke-width="1.300"/></svg>特殊符号</button>
      <button class="txt"><span class="no">NO</span>重新编号</button>
      <button class="txt"><svg viewBox="0 0 14 14"><path d="M3 2H8Q12 2 12 7T8 12H3V11H4V3H3Z" fill="none" stroke="#000" stroke-width="1.600"/><path d="M0 7H14" stroke="#000" stroke-width="1.500"/></svg>画删除线</button>
      <button class="drop" aria-label="删除线选项"><svg class="ar"><use href="#down"/></svg></button>
    </div>

    <div class="sheet">
      <table>
        <colgroup>
          <col style="width:41px"><col style="width:5px"><col style="width:34px"><col style="width:26px"><col style="width:25px"><col style="width:39px"><col style="width:26px"><col style="width:39px"><col style="width:32px"><col style="width:35px"><col style="width:39px"><col style="width:27px"><col style="width:27px"><col style="width:27px"><col style="width:25px"><col style="width:25px"><col style="width:27px"><col style="width:28px"><col style="width:25px"><col style="width:25px"><col style="width:25px"><col style="width:25px"><col style="width:25px"><col style="width:25px"><col style="width:20px"><col style="width:6px"><col style="width:20px"><col style="width:5px"><col style="width:20px">
        </colgroup>
        <thead>
          <tr class="letters"><th class="corner"><svg width="12" height="12" viewBox="0 0 12 12"><path d="M0 12L12 0M4 12L12 4M8 12L12 8" stroke="#949494" fill="none"/></svg></th><th></th><th>B</th><th>C</th><th>D</th><th>E</th><th>F</th><th>G</th><th>H</th><th>I</th><th>J</th><th>K</th><th>L</th><th>M</th><th>N</th><th>O</th><th>P</th><th>Q</th><th>R</th><th>S</th><th>T</th><th>U</th><th>V</th><th>W</th><th>X</th><th class="thin"><span>Y</span></th><th>Z</th><th></th><th>AB</th></tr>
        </thead>
        <tbody>
          <tr class="h7"><th><span class="sliver">1</span></th><td colspan="28" class="cursor"><span class="handle"></span></td></tr>
          <tr class="h27"><th>2</th><td class="edge" rowspan="5"></td><td class="title" colspan="27" rowspan="2">监理工作联系单</td></tr>
          <tr class="h28"><th>3</th></tr>
          <tr class="h20"><th>4</th><td colspan="17"></td><td colspan="5" class="code">GD-B1-224</td><td class="digit">0</td><td></td><td class="digit">0</td><td></td><td class="digit">1</td></tr>
          <tr class="h33"><th>5</th><td colspan="3" class="label">工程名称：</td><td colspan="12" class="filled"><input type="text" value="1111" aria-label="工程名称"></td><td colspan="2"></td><td colspan="2" class="label">编号：</td><td colspan="8" class="white"></td></tr>
          <tr class="h5"><th><span class="sliver">6</span></th><td colspan="27" class="rule"></td></tr>
          <tr class="h48"><th>7</th><td class="frame" rowspan="17"></td><td class="to">致：</td><td colspan="13" class="white underlined"></td><td colspan="13" class="right"></td></tr>
          <tr class="h38"><th>8</th><td colspan="27" rowspan="16" class="white right"></td></tr>
          <tr class="h38"><th>9</th></tr>
          <tr class="h38"><th>10</th></tr>
          <tr class="h38"><th>11</th></tr>
          <tr class="h42"><th>12</th></tr>
          <tr class="h42"><th>13</th></tr>
          <tr class="h42"><th>14</th></tr>
          <tr class="h47"><th>15</th></tr>
          <tr class="h47"><th>16</th></tr>
          <tr class="h42"><th>17</th></tr>
          <tr class="h42"><th>18</th></tr>
          <tr class="h42"><th>19</th></tr>
          <tr class="h42"><th>20</th></tr>
          <tr class="h42"><th>21</th></tr>
          <tr class="h42"><th>22</th></tr>
          <tr class="h47"><th>23</th></tr>
        </tbody>
      </table>
    </div>
  </section>
</main>
<div class="highlight"></div>
</body>
</html>
```
FILE: styles.css
```css
* { box-sizing: border-box; }
body {
  margin: 0;
  height: 100vh;
  overflow: hidden;
  display: flex;
  flex-direction: column;
  background: #fff;
  color: #000;
  font: 12px/18px "Noto Sans CJK SC", sans-serif;
}
.defs { position: absolute; }
a { color: inherit; text-decoration: none; }
svg { display: block; flex: none; }
button {
  margin: 0;
  padding: 0;
  border: 0;
  background: none;
  color: #000;
  font: inherit;
  white-space: nowrap;
  flex: none;
}
button:disabled { color: #949494; }
select {
  appearance: none;
  flex: 1;
  min-width: 0;
  margin: 0;
  padding: 0 4px;
  border: 0;
  background: transparent;
  color: #000;
  font: inherit;
  opacity: 1;
}
select:disabled { color: #949494; }
.sep { flex: none; width: 1px; background: #949494; box-shadow: 1px 0 #fff; }

/* window chrome */
.titlebar {
  flex: none;
  display: flex;
  align-items: center;
  gap: 3px;
  height: 20px;
  padding-bottom: 4px;
  background: linear-gradient(#a89c22, #9a8f18 50%, #83780e);
  border-bottom: 2px solid #6d6526;
}
.titlebar h1 {
  margin: 0;
  color: #fff;
  font: 12px/14px "Open Sans", "Noto Sans CJK SC", sans-serif;
  white-space: nowrap;
}
.menubar {
  flex: none;
  display: flex;
  gap: 11px;
  height: 21px;
  padding-left: 6px;
  background: linear-gradient(#f6f6f6, #eaeaea);
  border-bottom: 1px solid #949494;
  font: 12px/19px "Noto Sans", "Noto Sans CJK SC", sans-serif;
  white-space: nowrap;
}
.toolbar {
  flex: none;
  display: flex;
  gap: 1px;
  height: 37px;
  overflow: hidden;
  background: #ececec;
  border-bottom: 1px solid #949494;
}
.toolbar::before { content: ""; flex: none; width: 3px; margin: 3px 2px 2px 0; border-right: 1px solid #949494; }
.toolbar button {
  display: flex;
  flex-direction: column;
  align-items: center;
  min-width: 46px;
  padding: 4px 5px 0;
  line-height: 14px;
}
.toolbar .roomy { min-width: 79px; }
.toolbar .drop { min-width: 15px; width: 15px; padding: 16px 0 0; }
.toolbar .drop svg { width: 10px; height: 5px; }
.toolbar .sep { margin: 3px 3px 2px; }
.ic { width: 16px; height: 16px; }

.workspace {
  flex: 1;
  min-height: 0;
  display: flex;
  margin-top: 2px;
  border-top: 1px solid #949494;
}

/* catalogue */
.sidebar {
  flex: none;
  display: flex;
  flex-direction: column;
  width: 424px;
  margin-top: 1px;
  padding: 4px 3px 0 2px;
  background: #ececec;
  border-top: 1px solid #949494;
  border-right: 1px solid #949494;
}
.tabs { flex: none; display: flex; align-items: flex-end; height: 20px; }
.tab {
  height: 18px;
  padding: 0 4px;
  background: linear-gradient(#f4f4f4, #d8d8dc);
  border: 1px solid #84848c;
  border-bottom: 0;
  line-height: 17px;
}
.tab + .tab { margin-right: 1px; }
.tab.active { height: 20px; padding: 0 7px; background: #fff; }
.tabpanel {
  flex: 1;
  min-height: 0;
  display: flex;
  flex-direction: column;
  padding: 3px 1px 0 3px;
  background: #fff;
  border: 1px solid #84848c;
  border-bottom: 0;
}
.treetools {
  flex: none;
  display: flex;
  align-items: center;
  height: 26px;
  padding-left: 3px;
  background: #ececec;
}
.treetools button { width: 23px; padding-left: 4px; }
.treetools svg { width: 16px; height: 16px; }
.treetools .sep { height: 17px; margin: 0 1px; }
.library {
  flex: none;
  display: flex;
  align-items: center;
  height: 19px;
  margin-top: 1px;
  border: 1px solid #84848c;
  border-right-color: #ccc;
}
.knob {
  display: flex;
  align-items: center;
  justify-content: center;
  width: 18px;
  height: 16px;
  background: linear-gradient(#fde08a, #f7a823 60%, #ef8f0a);
  border: 1px solid #c07a1a;
  border-radius: 3px;
}
.tree {
  flex: 1;
  min-height: 0;
  margin-top: 1px;
  overflow: hidden;
  border-top: 1px solid #84848c;
  border-left: 1px solid #84848c;
}
.tree ul { margin: 0; padding: 0; list-style: none; }
.tree li ul { padding-left: 19px; }
.tree li {
  background: repeating-linear-gradient(#a0a0a0 0 1px, transparent 1px 2px) 9px 0 / 1px 100% no-repeat;
}
.tree li:last-child { background-size: 1px 9px; }
.tree .row { display: flex; align-items: center; height: 18px; padding-left: 5px; }
.tree li.leaf {
  padding-left: 20px;
  background-image: repeating-linear-gradient(#a0a0a0 0 1px, transparent 1px 2px), repeating-linear-gradient(90deg, #a0a0a0 0 1px, transparent 1px 2px);
  background-position: 9px 0, 9px 9px;
  background-size: 1px 100%, 10px 1px;
}
.tree li.leaf:last-child { background-size: 1px 9px, 10px 1px; }
.tg { width: 9px; height: 9px; }
.tg svg { width: 9px; height: 9px; }
.tree .fo { width: 17px; height: 16px; margin: 0 2px 0 5px; }
.tree .sh { width: 14px; height: 14px; margin: 0 4px 0 6px; color: #f00; }
.tree .leaf .sh { margin-left: 0; }
.tree .sh.done { color: #006400; }
.tree a { flex: 1; min-width: 0; padding-left: 1px; overflow: hidden; white-space: pre; line-height: 18px; }
.tree code { font: 10px/1 "DejaVu Sans Mono", monospace; }
.tree .selected { background: #9f9da3; color: #fff; outline: 1px dotted #555; outline-offset: -1px; }

.splitter {
  flex: none;
  display: flex;
  flex-direction: column;
  justify-content: flex-end;
  width: 12px;
  padding: 0 0 14px 4px;
  background: linear-gradient(90deg, #ececec 0 1px, #b0b0b0 1px 3px, #ececec 3px);
}
.grip {
  display: flex;
  align-items: center;
  height: 56%;
  background: linear-gradient(90deg, #fff 0 3px, #b9d7e6 4px, #7fa6bb 7px, #949494);
  border: 1px solid #949494;
  border-radius: 2px;
}

/* editor */
.editor {
  flex: 1;
  min-width: 0;
  display: flex;
  flex-direction: column;
  padding: 4px 0 0 3px;
  background: #fff;
  border-left: 1px solid #949494;
}
.bar {
  flex: none;
  display: flex;
  align-items: center;
  height: 24px;
  padding-left: 5px;
  background: #ececec;
  border-left: 1px solid #949494;
  border-bottom: 1px solid #949494;
  box-shadow: inset 0 1px #fff;
}
.bar.first { height: 25px; border-top: 1px solid #949494; }
.bar.last { height: 25px; margin: 1px 0; border-top: 1px solid #949494; }
.bar::before { content: ""; flex: none; width: 3px; height: 19px; margin-right: 2px; border-right: 1px solid #949494; }
.bar button { display: flex; align-items: center; justify-content: center; width: 26px; height: 22px; }
.bar button svg { width: 16px; height: 16px; }
.bar .sep { height: 19px; margin: 0 1px; }
.bar .sep.far { margin: 0 3px; }
.bar .ch { font: bold 14px/20px "Liberation Serif", serif; text-shadow: 1px 1px #fff; }
.bar .italic { font-style: italic; }
.bar .under { text-decoration: underline; }
.bar .wide { width: 33px; }
.bar .on { background: #f8f8f8; }
.bar .pressed { border: 1px solid #949494; border-right-color: #fff; border-bottom-color: #fff; }
.bar.cells button { width: 25px; }
.bar.cells .sep { margin: 0 2px 0 1px; }
.bar button.drop { width: 14px; }
.bar .ar, .bar .drop .ar { width: 9px; height: 5px; }
.bar button .bx { width: 14px; height: 14px; }
.combo {
  flex: none;
  display: flex;
  align-items: center;
  height: 18px;
  margin: 0 1px;
  padding: 0 4px;
  border: 1px solid #949494;
  color: #949494;
}
.combo select { line-height: 16px; }
.combo.font { width: 91px; }
.combo.size { width: 59px; padding-left: 0; }
.combo.size select { padding-left: 1px; }
.combo .tt { width: 14px; height: 14px; }
.combo.scale { width: 67px; padding-left: 0; background: linear-gradient(90deg, #fff 0 49px, #ececec 49px); color: #000; }
.combo.scale select { padding-left: 2px; }
.combo.line { width: 80px; }
.combo hr { width: 54px; margin: 0 auto 0 0; border: 0; border-top: 1px solid #949494; }
.bar button.txt { width: auto; gap: 2px; padding: 0 5px; }
.bar button.apart { margin-left: 14px; }
.bar button.txt svg { width: 14px; height: 14px; }
.no { font: 12px/20px "Liberation Serif", serif; }

.sheet {
  flex: 1;
  min-height: 0;
  overflow: hidden;
  background: #efefef;
  border-top: 1px solid #5a5a5a;
  border-left: 1px solid #5a5a5a;
}
table { width: 748px; table-layout: fixed; border-collapse: separate; border-spacing: 0; font-size: 13px; line-height: 16px; }
th, td { padding: 0; }
th {
  background: #efefef;
  border-right: 1px solid #949494;
  border-bottom: 1px solid #949494;
  box-shadow: inset 1px 1px #fff;
  font: 11px/14px "DejaVu Sans Mono", monospace;
}
td { background: #dedede; border-right: 1px solid #d0cec6; border-bottom: 1px solid #d0cec6; }
.letters { height: 15px; }
.letters th { border-bottom: 0; font: bold 13px/15px "Liberation Serif", serif; }
.letters .corner { border-right-color: #dedede; }
.corner svg { margin-left: auto; }
.thin span { display: block; width: 5px; overflow: hidden; font-size: 10px; font-weight: normal; }
.sliver { display: block; height: 4px; overflow: hidden; line-height: 4px; }
.h5 { height: 5px; }
.h7 { height: 7px; }
.h20 { height: 20px; }
.h27 { height: 27px; }
.h28 { height: 28px; }
.h33 { height: 33px; }
.h38 { height: 38px; }
.h42 { height: 42px; }
.h47 { height: 47px; }
.h48 { height: 48px; }
.h7 th { border-top: 1px solid #949494; }
.cursor { position: relative; border: 2px solid #1c1a20; border-bottom-width: 3px; border-right: 0; }
.handle { position: absolute; right: -3px; bottom: -4px; width: 5px; height: 5px; background: #1c1a20; }
.edge { border-bottom: 0; }
.title { padding-bottom: 4px; background: #fff; text-align: center; font-size: 25px; line-height: 30px; font-weight: bold; }
.code { text-align: right; padding-right: 2px; border-right-color: #000; font: bold 13px/16px "Liberation Mono", monospace; }
.digit { background: #fff; text-align: center; border-color: #000; box-shadow: 0 -1px #000, -1px 0 #000; font: 11px/16px "DejaVu Sans Mono", monospace; }
.label { padding-left: 10px; text-align: left; white-space: nowrap; }
.white { background: #fff; }
.filled { background: #f0c8a6; }
.filled input {
  display: block;
  width: 100%;
  padding: 0 3px;
  border: 0;
  background: transparent;
  color: #000;
  font: 11px/20px "DejaVu Sans Mono", monospace;
}
.rule { border-bottom: 2px solid #000; }
.frame { border-right: 2px solid #000; border-bottom: 0; }
.to { padding-left: 4px; vertical-align: bottom; white-space: nowrap; }
.underlined { border-bottom-color: #000; }
.right { border-right: 2px solid #000; }

/* marked region laid over the window */
.highlight {
  position: absolute;
  left: 12px;
  top: 193px;
  width: 457px;
  height: 545px;
  border: 3px solid #ff3838;
  pointer-events: none;
}
```
